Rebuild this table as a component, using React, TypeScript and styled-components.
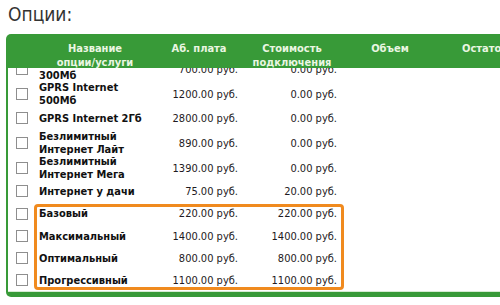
import { useLayoutEffect, useRef } from 'react';
import styled, { createGlobalStyle } from 'styled-components';

const GlobalStyle = createGlobalStyle`
  html, body {
    margin: 0;
    padding: 0;
    background: #fff;
    overflow: hidden;
  }
  body {
    font-family: 'DejaVu Sans Condensed', 'DejaVu Sans', Verdana, sans-serif;
  }
`;

// widths: checkbox / name / fee / connection / volume / rest
const COLS = '26px 122px 86px 100px 96px 94px';

const Page = styled.div`
  padding: 0 0 0 6px;
  width: 560px;
`;

const Title = styled.h2`
  margin: 0;
  padding: 2px 0 0 2px;
  height: 34px;
  box-sizing: border-box;
  font-family: Tahoma, 'DejaVu Sans Condensed', 'DejaVu Sans', sans-serif;
  font-weight: normal;
  font-size: 19px;
  line-height: 24px;
  color: #333;
`;

const Panel = styled.div`
  background: #389a38;
  border-radius: 5px;
  padding: 0 0 5px 2px;
  width: 526px;
`;

const HeadRow = styled.div`
  display: grid;
  grid-template-columns: ${COLS};
  height: 34px;
  box-sizing: border-box;
  padding-top: 8px;
`;

const HeadCell = styled.div`
  font-size: 11px;
  font-weight: bold;
  line-height: 14px;
  color: #eaf6e2;
  text-align: center;
`;

const Body = styled.div`
  background: #fff;
  height: 223px;
  overflow: hidden;
  border-bottom: 1px solid #d6ecd2;
`;

const Row = styled.div<{ $h: number }>`
  display: grid;
  grid-template-columns: ${COLS};
  height: ${(p) => p.$h}px;
  align-items: center;
  font-size: 11px;
`;

const CheckCell = styled.div`
  display: flex;
  align-items: center;
`;

const Check = styled.span`
  display: block;
  width: 12px;
  height: 12px;
  box-sizing: border-box;
  margin-left: 8px;
  border: 1px solid #8e8e8e;
  background: #fff;
`;

const Name = styled.div`
  padding-left: 5px;
  font-weight: bold;
  line-height: 13px;
  color: #111;
`;

const Money = styled.div<{ $pad: number }>`
  text-align: right;
  padding-right: ${(p) => p.$pad}px;
  color: #1e1a22;
  white-space: nowrap;
`;

const Highlight = styled.div`
  position: relative;

  &::after {
    content: '';
    position: absolute;
    left: 26px;
    top: 2px;
    width: 310px;
    bottom: 1px;
    box-sizing: border-box;
    border: 3px solid #f08a1e;
    border-radius: 4px;
    pointer-events: none;
  }
`;

type Option = { name: string; fee: string; connect: string; h: number };

const options: Option[] = [
  { name: 'GPRS Internet 300Мб', fee: '700.00', connect: '0.00', h: 25 },
  { name: 'GPRS Internet 500Мб', fee: '1200.00', connect: '0.00', h: 25 },
  { name: 'GPRS Internet 2Гб', fee: '2800.00', connect: '0.00', h: 24 },
  { name: 'Безлимитный Интернет Лайт', fee: '890.00', connect: '0.00', h: 25 },
  { name: 'Безлимитный Интернет Мега', fee: '1390.00', connect: '0.00', h: 25 },
  { name: 'Интернет у дачи', fee: '75.00', connect: '20.00', h: 22 },
];

const tariffs: Option[] = [
  { name: 'Базовый', fee: '220.00', connect: '220.00', h: 23 },
  { name: 'Максимальный', fee: '1400.00', connect: '1400.00', h: 22 },
  { name: 'Оптимальный', fee: '800.00', connect: '800.00', h: 22 },
  { name: 'Прогрессивный', fee: '1100.00', connect: '1100.00', h: 22 },
];

function OptionRow({ o }: { o: Option }) {
  return (
    <Row $h={o.h}>
      <CheckCell>
        <Check />
      </CheckCell>
      <Name>{o.name}</Name>
      <Money $pad={4}>{o.fee} руб.</Money>
      <Money $pad={5}>{o.connect} руб.</Money>
      <div />
      <div />
    </Row>
  );
}

export default function App() {
  const bodyRef = useRef<HTMLDivElement>(null);

  // список прокручен: первая строка наполовину под шапкой
  useLayoutEffect(() => {
    if (bodyRef.current) bodyRef.current.scrollTop = 13;
  }, []);

  return (
    <>
      <GlobalStyle />
      <Page>
        <Title>Опции:</Title>
        <Panel>
          <HeadRow>
            <HeadCell />
            <HeadCell>
              Название
              <br />
              опции/услуги
            </HeadCell>
            <HeadCell>Аб. плата</HeadCell>
            <HeadCell>
              Стоимость
              <br />
              подключения
            </HeadCell>
            <HeadCell>Объем</HeadCell>
            <HeadCell>Остаток</HeadCell>
          </HeadRow>
          <Body ref={bodyRef}>
            {options.map((o) => (
              <OptionRow key={o.name} o={o} />
            ))}
            <Highlight>
              {tariffs.map((o) => (
                <OptionRow key={o.name} o={o} />
              ))}
            </Highlight>
          </Body>
        </Panel>
      </Page>
    </>
  );
}
